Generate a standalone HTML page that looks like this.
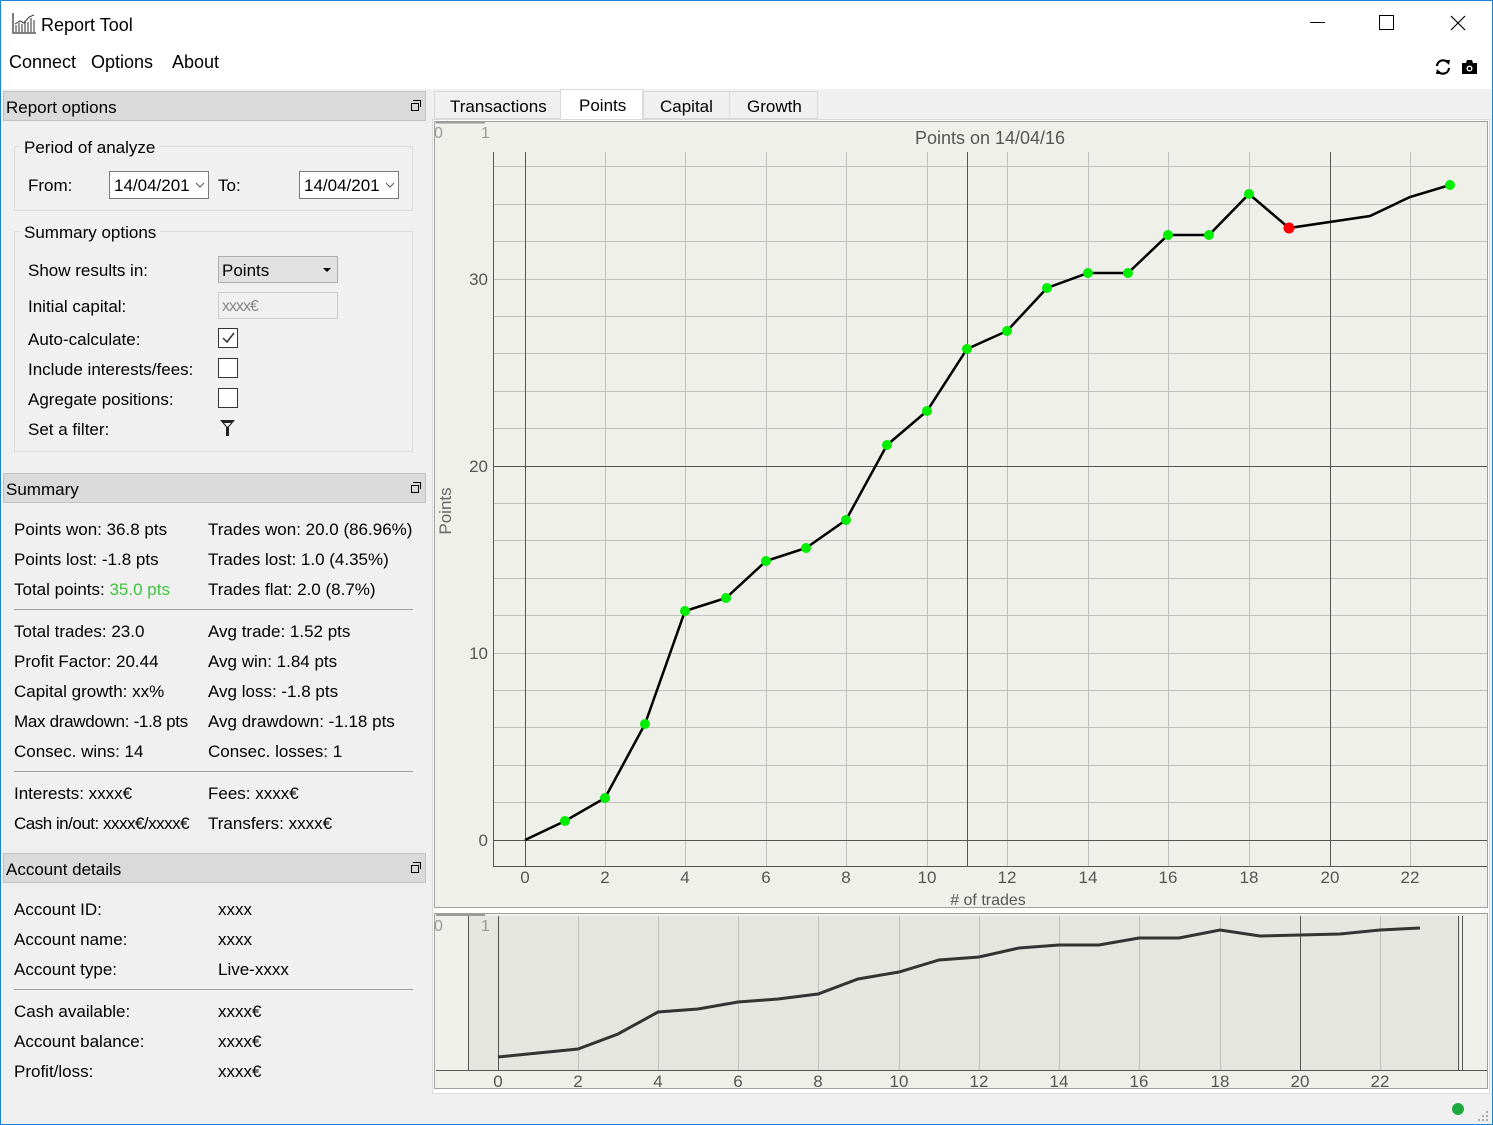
<!DOCTYPE html>
<html><head><meta charset="utf-8"><style>
*{margin:0;padding:0;box-sizing:border-box}
body{width:1493px;height:1125px;overflow:hidden;background:#f0f0f0;font-family:"Liberation Sans",sans-serif;font-size:17px;color:#000;position:relative}
.t{position:absolute;line-height:20px;white-space:nowrap;margin-top:1px}
.hdr{position:absolute;left:3px;width:423px;height:30px;background:#dadada;border:1px solid #c2c2c2}
.hdr span{position:absolute;left:2px;top:6px}
.hdr i{position:absolute;right:6px;top:11px;width:8px;height:8px;border:1px solid #000}
.hdr i:before{content:"";position:absolute;left:1px;top:-4px;width:7px;height:6px;border:1px solid #000;border-bottom:none;border-left:none}
.grp{position:absolute;border:1px solid #dcdcdc}
.sep{position:absolute;left:14px;width:399px;height:1px;background:#a0a0a0}
.cb{position:absolute;left:218px;width:20px;height:20px;border:1px solid #333;background:#fff}
</style></head><body>
<div style="position:absolute;inset:0;border:1px solid #1883d7;pointer-events:none;z-index:5"></div>
<div style="position:absolute;left:1px;top:1px;width:1491px;height:88px;background:#fff"></div>
<svg style="position:absolute;left:11px;top:11px" width="26" height="24" viewBox="0 0 26 24"><path d="M2 2V22H25" stroke="#555" fill="none" stroke-width="1.5"/><path d="M5 21V14M8 21V12M11 21V13M14 21V10M17 21V11M20 21V7M23 21V9" stroke="#777" stroke-width="1.5"/><path d="M4 13L9 10L13 12L18 6L23 4" stroke="#333" fill="none"/></svg>
<div class="t" style="left:41px;top:14px;font-size:18px">Report Tool</div>
<div class="t" style="left:9px;top:51px;font-size:18px">Connect</div>
<div class="t" style="left:91px;top:51px;font-size:18px">Options</div>
<div class="t" style="left:172px;top:51px;font-size:18px">About</div>
<div style="position:absolute;left:1310px;top:22px;width:15px;height:1px;background:#000"></div>
<div style="position:absolute;left:1379px;top:15px;width:15px;height:15px;border:1px solid #000"></div>
<svg style="position:absolute;left:1450px;top:15px" width="16" height="16"><path d="M1 1L15 15M15 1L1 15" stroke="#000" stroke-width="1.2"/></svg>
<svg style="position:absolute;left:1434px;top:58px" width="18" height="18" viewBox="0 0 18 18"><path d="M3 8A6 6 0 0 1 14 5M15 10A6 6 0 0 1 4 13" stroke="#000" stroke-width="2.2" fill="none"/><path d="M11 2L16 2L15 7Z M7 16L2 16L3 11Z" fill="#000"/></svg>
<svg style="position:absolute;left:1461px;top:59px" width="17" height="16" viewBox="0 0 17 16"><path d="M1 4H5L6 1H11L12 4H16V15H1Z" fill="#000"/><circle cx="8.5" cy="9.5" r="3" fill="#fff"/><circle cx="8.5" cy="9.5" r="1.6" fill="#000"/></svg>

<div class="hdr" style="top:91px"><span>Report options</span><i></i></div>
<div class="grp" style="left:14px;top:146px;width:399px;height:65px"></div>
<div class="t" style="left:20px;top:137px;background:#f0f0f0;padding:0 4px">Period of analyze</div>
<div class="t" style="left:28px;top:175px">From:</div>
<div style="position:absolute;left:109px;top:171px;width:100px;height:28px;border:1px solid #7a7a7a;background:#fff"><span class="t" style="left:4px;top:3px">14/04/201</span><svg style="position:absolute;right:3px;top:10px" width="10" height="7"><path d="M1 1L5 5L9 1" stroke="#555" fill="none"/></svg></div>
<div class="t" style="left:218px;top:175px">To:</div>
<div style="position:absolute;left:299px;top:171px;width:100px;height:28px;border:1px solid #7a7a7a;background:#fff"><span class="t" style="left:4px;top:3px">14/04/201</span><svg style="position:absolute;right:3px;top:10px" width="10" height="7"><path d="M1 1L5 5L9 1" stroke="#555" fill="none"/></svg></div>
<div class="grp" style="left:14px;top:231px;width:399px;height:221px"></div>
<div class="t" style="left:20px;top:222px;background:#f0f0f0;padding:0 4px">Summary options</div>
<div class="t" style="left:28px;top:260px">Show results in:</div>
<div style="position:absolute;left:218px;top:256px;width:120px;height:27px;border:1px solid #adadad;background:#e1e1e1"><span class="t" style="left:3px;top:3px">Points</span><div style="position:absolute;right:6px;top:11px;border:4px solid transparent;border-top:4px solid #000;border-bottom:none"></div></div>
<div class="t" style="left:28px;top:296px">Initial capital:</div>
<div style="position:absolute;left:218px;top:292px;width:120px;height:27px;border:1px solid #ccc;background:#f0f0f0"><span class="t" style="left:3px;top:3px;color:#888;letter-spacing:-1px;font-size:16px">xxxx€</span></div>
<div class="t" style="left:28px;top:329px">Auto-calculate:</div>
<div class="cb" style="top:328px"><svg width="18" height="18" style="position:absolute;left:0;top:0"><path d="M4 9L8 13L15 4" stroke="#333" stroke-width="1.5" fill="none"/></svg></div>
<div class="t" style="left:28px;top:359px">Include interests/fees:</div>
<div class="cb" style="top:358px"></div>
<div class="t" style="left:28px;top:389px">Agregate positions:</div>
<div class="cb" style="top:388px"></div>
<div class="t" style="left:28px;top:419px">Set a filter:</div>
<svg style="position:absolute;left:220px;top:420px" width="15" height="17"><path d="M0 0H15L9 7V16H6V7Z" fill="#222"/><path d="M4 3H11L7.5 7Z" fill="#f0f0f0"/></svg>

<div class="hdr" style="top:473px"><span>Summary</span><i></i></div>
<div class="t" style="left:14px;top:519px">Points won: 36.8 pts</div>
<div class="t" style="left:208px;top:519px">Trades won: 20.0 (86.96%)</div>
<div class="t" style="left:14px;top:549px">Points lost: -1.8 pts</div>
<div class="t" style="left:208px;top:549px">Trades lost: 1.0 (4.35%)</div>
<div class="t" style="left:14px;top:579px">Total points: <span style="color:#3ec43e">35.0 pts</span></div>
<div class="t" style="left:208px;top:579px">Trades flat: 2.0 (8.7%)</div>
<div class="sep" style="top:609px"></div>
<div class="t" style="left:14px;top:621px">Total trades: 23.0</div>
<div class="t" style="left:208px;top:621px">Avg trade: 1.52 pts</div>
<div class="t" style="left:14px;top:651px">Profit Factor: 20.44</div>
<div class="t" style="left:208px;top:651px">Avg win: 1.84 pts</div>
<div class="t" style="left:14px;top:681px">Capital growth: xx%</div>
<div class="t" style="left:208px;top:681px">Avg loss: -1.8 pts</div>
<div class="t" style="left:14px;top:711px;letter-spacing:-0.3px">Max drawdown: -1.8 pts</div>
<div class="t" style="left:208px;top:711px">Avg drawdown: -1.18 pts</div>
<div class="t" style="left:14px;top:741px">Consec. wins: 14</div>
<div class="t" style="left:208px;top:741px">Consec. losses: 1</div>
<div class="sep" style="top:771px"></div>
<div class="t" style="left:14px;top:783px">Interests: xxxx€</div>
<div class="t" style="left:208px;top:783px">Fees: xxxx€</div>
<div class="t" style="left:14px;top:813px;letter-spacing:-0.5px">Cash in/out: xxxx€/xxxx€</div>
<div class="t" style="left:208px;top:813px">Transfers: xxxx€</div>

<div class="hdr" style="top:853px"><span>Account details</span><i></i></div>
<div class="t" style="left:14px;top:899px">Account ID:</div><div class="t" style="left:218px;top:899px">xxxx</div>
<div class="t" style="left:14px;top:929px">Account name:</div><div class="t" style="left:218px;top:929px">xxxx</div>
<div class="t" style="left:14px;top:959px">Account type:</div><div class="t" style="left:218px;top:959px">Live-xxxx</div>
<div class="sep" style="top:989px"></div>
<div class="t" style="left:14px;top:1001px">Cash available:</div><div class="t" style="left:218px;top:1001px">xxxx€</div>
<div class="t" style="left:14px;top:1031px">Account balance:</div><div class="t" style="left:218px;top:1031px">xxxx€</div>
<div class="t" style="left:14px;top:1061px">Profit/loss:</div><div class="t" style="left:218px;top:1061px">xxxx€</div>

<div style="position:absolute;left:434px;top:91px;width:384px;height:28px;background:#f0f0f0;border:1px solid #d9d9d9"></div>
<div class="t" style="left:450px;top:96px">Transactions</div>
<div style="position:absolute;left:560px;top:89px;width:83px;height:32px;background:#fff;border:1px solid #d9d9d9;border-bottom:none"></div>
<div class="t" style="left:579px;top:95px">Points</div>
<div style="position:absolute;left:643px;top:92px;width:1px;height:26px;background:#d9d9d9"></div>
<div class="t" style="left:660px;top:96px">Capital</div>
<div style="position:absolute;left:729px;top:92px;width:1px;height:26px;background:#d9d9d9"></div>
<div class="t" style="left:747px;top:96px">Growth</div>
<div style="position:absolute;left:432px;top:119px;width:1058px;height:975px;background:#fff;border:1px solid #d9d9d9"></div>

<svg style="position:absolute;left:0;top:0" width="1493" height="1125" font-family="Liberation Sans, sans-serif" font-size="17">
<rect x="434.5" y="121.5" width="1053" height="786" fill="#f0f0eb" stroke="#a0a0a0"/>
<line x1="436" y1="122.5" x2="485" y2="122.5" stroke="#999" stroke-width="2"/>
<text x="434" y="138" fill="#999" font-size="16">0</text><text x="481" y="138" fill="#999" font-size="16">1</text>
<text x="990" y="144" text-anchor="middle" fill="#555" font-size="18">Points on 14/04/16</text>
<g stroke="#c0c0c0" stroke-width="1" fill="none">
<path d="M493 802.5H1487M493 765.5H1487M493 727.5H1487M493 690.5H1487M493 653.5H1487M493 615.5H1487M493 578.5H1487M493 540.5H1487M493 503.5H1487M493 428.5H1487M493 391.5H1487M493 353.5H1487M493 316.5H1487M493 279.5H1487M493 241.5H1487M493 204.5H1487M493 166.5H1487"/>
<path d="M605.5 152V866M685.5 152V866M766.5 152V866M846.5 152V866M927.5 152V866M1007.5 152V866M1088.5 152V866M1168.5 152V866M1249.5 152V866M1410.5 152V866"/>
</g>
<g stroke="#555" stroke-width="1" fill="none">
<path d="M493 840.5H1487M493 466.5H1487M525.5 152V866M967.5 152V866M1330.5 152V866M493.5 152V866.5H1487"/>
</g>
<g fill="#555" text-anchor="end"><text x="488" y="846">0</text><text x="488" y="659">10</text><text x="488" y="472">20</text><text x="488" y="285">30</text></g>
<g fill="#555" text-anchor="middle"><text x="525" y="883">0</text><text x="605" y="883">2</text><text x="685" y="883">4</text><text x="766" y="883">6</text><text x="846" y="883">8</text><text x="927" y="883">10</text><text x="1007" y="883">12</text><text x="1088" y="883">14</text><text x="1168" y="883">16</text><text x="1249" y="883">18</text><text x="1330" y="883">20</text><text x="1410" y="883">22</text>
<text x="988" y="905" font-size="16"># of trades</text></g>
<text transform="translate(451,511) rotate(-90)" text-anchor="middle" fill="#666">Points</text>
<polyline fill="none" stroke="#000" stroke-width="2.5" points="525,840 565,821 605,798 645,724 685,611 726,598 766,561 806,548 846,520 887,445 927,411 967,349 1007,331 1047,288 1088,273 1128,273 1168,235 1209,235 1249,194 1289,228 1370,216 1410,197 1450,185"/>
<g fill="#00ee00"><circle cx="565" cy="821" r="5"/><circle cx="605" cy="798" r="5"/><circle cx="645" cy="724" r="5"/><circle cx="685" cy="611" r="5"/><circle cx="726" cy="598" r="5"/><circle cx="766" cy="561" r="5"/><circle cx="806" cy="548" r="5"/><circle cx="846" cy="520" r="5"/><circle cx="887" cy="445" r="5"/><circle cx="927" cy="411" r="5"/><circle cx="967" cy="349" r="5"/><circle cx="1007" cy="331" r="5"/><circle cx="1047" cy="288" r="5"/><circle cx="1088" cy="273" r="5"/><circle cx="1128" cy="273" r="5"/><circle cx="1168" cy="235" r="5"/><circle cx="1209" cy="235" r="5"/><circle cx="1249" cy="194" r="5"/><circle cx="1450" cy="185" r="5"/></g>
<circle cx="1289" cy="228" r="5.5" fill="#ff0000"/>

<rect x="434.5" y="913.5" width="1053" height="175" fill="#f0f0eb" stroke="#a0a0a0"/>
<rect x="468" y="916" width="992" height="154" fill="#e6e6e1"/>
<line x1="436" y1="915" x2="485" y2="915" stroke="#999" stroke-width="2"/>
<text x="434" y="931" fill="#999" font-size="16">0</text><text x="481" y="931" fill="#999" font-size="16">1</text>
<g stroke="#c0c0c0" fill="none"><path d="M578.5 916V1070M658.5 916V1070M738.5 916V1070M818.5 916V1070M899.5 916V1070M979.5 916V1070M1059.5 916V1070M1139.5 916V1070M1220.5 916V1070M1380.5 916V1070"/></g>
<g stroke="#555" fill="none"><path d="M468.5 916V1070M498.5 916V1070M1300.5 916V1070M1458.5 916V1070M1462.5 916V1070M436 1070.5H1487"/></g>
<polyline fill="none" stroke="#333" stroke-width="3" points="498,1057 538,1053 578,1049 618,1034 658,1012 698,1009 738,1002 778,999 818,994 858,979 899,972 939,960 979,957 1019,948 1059,945 1099,945 1139,938 1179,938 1220,930 1260,936 1300,935 1340,934 1380,930 1420,928"/>
<g fill="#555" text-anchor="middle"><text x="498" y="1087">0</text><text x="578" y="1087">2</text><text x="658" y="1087">4</text><text x="738" y="1087">6</text><text x="818" y="1087">8</text><text x="899" y="1087">10</text><text x="979" y="1087">12</text><text x="1059" y="1087">14</text><text x="1139" y="1087">16</text><text x="1220" y="1087">18</text><text x="1300" y="1087">20</text><text x="1380" y="1087">22</text></g>
<circle cx="1458" cy="1109" r="6" fill="#1fa83b"/>
<g fill="#aaa"><rect x="1486" y="1111" width="2" height="2"/><rect x="1482" y="1115" width="2" height="2"/><rect x="1486" y="1115" width="2" height="2"/><rect x="1478" y="1119" width="2" height="2"/><rect x="1482" y="1119" width="2" height="2"/><rect x="1486" y="1119" width="2" height="2"/></g>
</svg>
</body></html>
